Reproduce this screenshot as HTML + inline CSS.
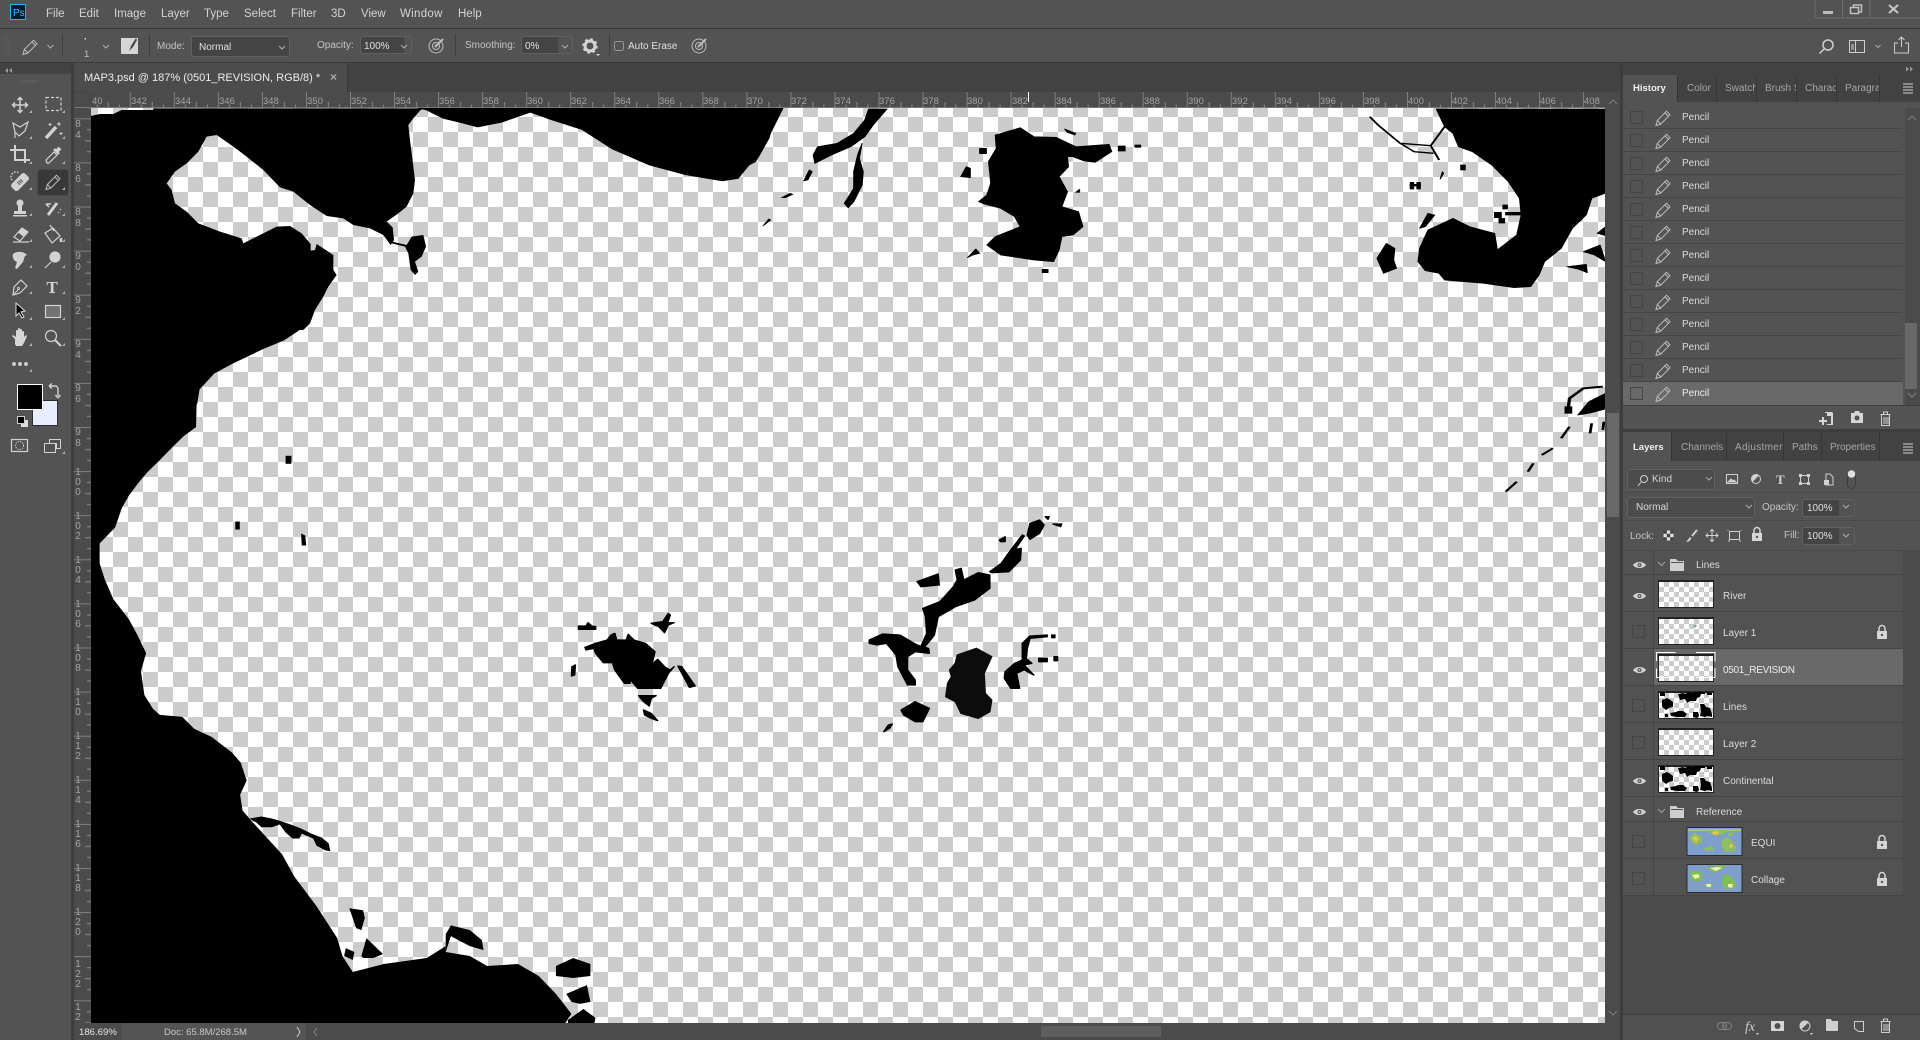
<!DOCTYPE html>
<html><head><meta charset="utf-8"><title>MAP3.psd</title>
<style>
html,body{margin:0;padding:0;background:#535353}
#r{position:relative;width:1920px;height:1040px;overflow:hidden;background:#535353;font:10px "Liberation Sans",sans-serif;color:#d4d4d4}
.a{position:absolute}
.t{position:absolute;white-space:nowrap;line-height:14px;overflow:hidden}
.in{position:absolute;background:#444;border:1px solid #616161;border-radius:3px;box-sizing:border-box}
.ro{position:absolute;left:1654px;width:249px;background:#525252;border-bottom:1px solid #444;box-sizing:border-box}
.th{position:absolute;left:1658px;width:56px;height:28px;box-sizing:border-box;border:1px solid #222;border-top-width:2px;background:#fff repeating-conic-gradient(#ccc 0 25%,#fff 0 50%) 0 0/10px 10px}
svg{position:absolute;left:0;top:0}
</style></head><body><div id="r">
<!-- chrome bars -->
<div class="a" style="left:0;top:28px;width:1920px;height:1px;background:#3a3a3a"></div>
<div class="a" style="left:0;top:62px;width:1920px;height:1px;background:#3a3a3a"></div>
<div class="a" style="left:0;top:63px;width:71px;height:11px;background:#424242"></div>
<div class="a" style="left:71px;top:63px;width:3px;height:977px;background:#3d3d3d"></div>
<div class="a" style="left:74px;top:63px;width:1548px;height:29px;background:#424242"></div>
<div class="a" style="left:74px;top:63px;width:274px;height:29px;background:#4c4c4c;border-right:1px solid #3a3a3a;box-sizing:border-box"></div>
<div class="a" style="left:74px;top:92px;width:1531px;height:16px;background:#4b4b4b"></div>
<div class="a" style="left:74px;top:108px;width:17px;height:915px;background:#4b4b4b"></div>
<div class="a" style="left:74px;top:107px;width:1531px;height:1px;background:#777"></div>
<div class="a" style="left:1605px;top:92px;width:15px;height:931px;background:#4b4b4b"></div>
<div class="a" style="left:1607px;top:413px;width:12px;height:104px;background:#696969"></div>
<div class="a" style="left:1620px;top:63px;width:3px;height:977px;background:#3d3d3d"></div>
<!-- canvas -->
<div class="a" style="left:91px;top:108px;width:1514px;height:915px;background:#fff repeating-conic-gradient(#ccc 0 25%,#fff 0 50%) -68px -81px/30px 30px"></div>
<!-- status -->
<div class="a" style="left:74px;top:1023px;width:1546px;height:17px;background:#4b4b4b"></div>
<div class="a" style="left:122px;top:1023px;width:184px;height:17px;background:#545454"></div>
<div class="a" style="left:1041px;top:1026px;width:120px;height:11px;background:#5e5e5e"></div>
<div class="t" style="left:79px;top:1026px;font-size:9.6px;color:#e4e4e4">186.69%</div>
<div class="t" style="left:164px;top:1026px;font-size:9.5px;color:#c8c8c8">Doc: 65.8M/268.5M</div>
<!-- right panel -->
<div class="a" style="left:1623px;top:63px;width:297px;height:12px;background:#424242"></div>
<div class="a" style="left:1623px;top:75px;width:297px;height:27px;background:#424242"></div>
<div class="a" style="left:1623px;top:75px;width:55px;height:28px;background:#535353;border-right:1px solid #333;box-sizing:border-box"></div>
<div class="a" style="left:1623px;top:102px;width:297px;height:303px;background:#535353"></div>
<div class="a" style="left:1905px;top:108px;width:15px;height:297px;background:#4b4b4b"></div>
<div class="a" style="left:1905px;top:323px;width:12px;height:66px;background:#696969"></div>
<div class="a" style="left:1623px;top:382px;width:280px;height:23px;background:#696969"></div>
<div class="a" style="left:1623px;top:405px;width:297px;height:1px;background:#3d3d3d"></div>
<div class="a" style="left:1623px;top:429px;width:297px;height:3px;background:#3d3d3d"></div>
<div class="a" style="left:1623px;top:432px;width:297px;height:29px;background:#424242"></div>
<div class="a" style="left:1623px;top:432px;width:49px;height:30px;background:#535353;border-right:1px solid #333;box-sizing:border-box"></div>
<div class="a" style="left:1623px;top:461px;width:297px;height:90px;background:#535353"></div>
<div class="a" style="left:1623px;top:551px;width:297px;height:463px;background:#4b4b4b"></div>
<div class="a" style="left:1623px;top:492px;width:297px;height:1px;background:#4a4a4a"></div>
<div class="a" style="left:1623px;top:520px;width:297px;height:1px;background:#4a4a4a"></div>
<div class="a" style="left:1623px;top:550px;width:297px;height:1px;background:#4a4a4a"></div>
<div class="a" style="left:1623px;top:551px;width:280px;height:345px;background:#444"></div>
<div class="a" style="left:1623px;top:1014px;width:297px;height:1px;background:#3d3d3d"></div>
<div class="a" style="left:1623px;top:1015px;width:297px;height:25px;background:#505050"></div>
<!-- eye column -->
<div class="a" style="left:1623px;top:551px;width:30px;height:344px;background:#525252"></div>
<div class="a" style="left:1623px;top:574px;width:30px;height:1px;background:#444"></div>
<div class="a" style="left:1623px;top:611px;width:30px;height:1px;background:#444"></div>
<div class="a" style="left:1623px;top:648px;width:30px;height:1px;background:#444"></div>
<div class="a" style="left:1623px;top:685px;width:30px;height:1px;background:#444"></div>
<div class="a" style="left:1623px;top:722px;width:30px;height:1px;background:#444"></div>
<div class="a" style="left:1623px;top:759px;width:30px;height:1px;background:#444"></div>
<div class="a" style="left:1623px;top:796px;width:30px;height:1px;background:#444"></div>
<div class="a" style="left:1623px;top:821px;width:30px;height:1px;background:#444"></div>
<div class="a" style="left:1623px;top:858px;width:30px;height:1px;background:#444"></div>
<div class="a" style="left:1623px;top:895px;width:30px;height:1px;background:#444"></div>
<!-- layer rows -->
<div class="ro" style="top:551px;height:24px"></div>
<div class="ro" style="top:575px;height:37px"></div>
<div class="ro" style="top:612px;height:37px"></div>
<div class="ro" style="top:649px;height:37px;background:#696969"></div>
<div class="ro" style="top:686px;height:37px"></div>
<div class="ro" style="top:723px;height:37px"></div>
<div class="ro" style="top:760px;height:37px"></div>
<div class="ro" style="top:797px;height:25px"></div>
<div class="ro" style="top:822px;height:37px"></div>
<div class="ro" style="top:859px;height:37px"></div>
<div class="th" style="top:580px"></div>
<div class="th" style="top:617px"></div>
<div class="th" style="top:654px"></div>
<div class="th" style="top:691px"></div>
<div class="th" style="top:728px"></div>
<div class="th" style="top:765px"></div>
<!-- inputs -->
<div class="in" style="left:191px;top:36px;width:99px;height:21px"></div>
<div class="in" style="left:360px;top:36px;width:52px;height:18px;background:linear-gradient(90deg,#444 43px,#535353 43px)"></div>
<div class="in" style="left:521px;top:36px;width:52px;height:18px;background:linear-gradient(90deg,#444 36px,#535353 36px)"></div>
<div class="in" style="left:1627px;top:469px;width:88px;height:21px;background:#4c4c4c"></div>
<div class="in" style="left:1627px;top:497px;width:128px;height:21px;background:#4c4c4c"></div>
<div class="in" style="left:1802px;top:499px;width:53px;height:18px;background:linear-gradient(90deg,#444 36px,#535353 36px)"></div>
<div class="in" style="left:1802px;top:527px;width:53px;height:18px;background:linear-gradient(90deg,#444 36px,#535353 36px)"></div>
<!-- text: menu -->
<div class="t" style="left:46px;top:7px;font-size:11.5px">File</div>
<div class="t" style="left:79px;top:7px;font-size:11.5px">Edit</div>
<div class="t" style="left:114px;top:7px;font-size:11.5px">Image</div>
<div class="t" style="left:161px;top:7px;font-size:11.5px">Layer</div>
<div class="t" style="left:204px;top:7px;font-size:11.5px">Type</div>
<div class="t" style="left:244px;top:7px;font-size:11.5px">Select</div>
<div class="t" style="left:291px;top:7px;font-size:11.5px">Filter</div>
<div class="t" style="left:331px;top:7px;font-size:11.5px">3D</div>
<div class="t" style="left:361px;top:7px;font-size:11.5px">View</div>
<div class="t" style="left:400px;top:7px;font-size:11.5px;letter-spacing:.3px">Window</div>
<div class="t" style="left:458px;top:7px;font-size:11.5px">Help</div>
<!-- options -->
<div class="t" style="left:157px;top:40px;color:#c4c4c4">Mode:</div>
<div class="t" style="left:199px;top:41px;color:#e0e0e0">Normal</div>
<div class="t" style="left:317px;top:39px;color:#c4c4c4">Opacity:</div>
<div class="t" style="left:364px;top:40px;color:#e0e0e0">100%</div>
<div class="t" style="left:465px;top:39px;color:#c4c4c4">Smoothing:</div>
<div class="t" style="left:525px;top:40px;color:#e0e0e0">0%</div>
<div class="t" style="left:628px;top:40px;color:#e0e0e0">Auto Erase</div>
<div class="t" style="left:84px;top:48px;color:#c4c4c4;font-size:9.5px">1</div>
<!-- doc tab -->
<div class="t" style="left:84px;top:71px;font-size:11px;color:#ececec">MAP3.psd @ 187% (0501_REVISION, RGB/8) *</div>
<div class="t" style="left:330px;top:70px;font-size:12px;color:#a8a8a8;font-weight:bold">×</div>
<!-- history tabs -->
<div class="t" style="left:1633px;top:82px;color:#f0f0f0;font-weight:bold;font-size:9.5px">History</div>
<div class="t" style="left:1687px;top:82px;color:#a6a6a6">Color</div>
<div class="t" style="left:1725px;top:82px;color:#a6a6a6;width:31px">Swatches</div>
<div class="t" style="left:1765px;top:82px;color:#a6a6a6;width:31px">Brush Settings</div>
<div class="t" style="left:1805px;top:82px;color:#a6a6a6;width:31px">Character</div>
<div class="t" style="left:1845px;top:82px;color:#a6a6a6;width:34px">Paragraph</div>
<!-- layers tabs -->
<div class="t" style="left:1633px;top:441px;color:#f0f0f0;font-weight:bold;font-size:9.5px">Layers</div>
<div class="t" style="left:1681px;top:441px;color:#a6a6a6">Channels</div>
<div class="t" style="left:1735px;top:441px;color:#a6a6a6;width:48px;letter-spacing:.3px">Adjustments</div>
<div class="t" style="left:1792px;top:441px;color:#a6a6a6">Paths</div>
<div class="t" style="left:1830px;top:441px;color:#a6a6a6">Properties</div>
<div class="t" style="left:1652px;top:473px;color:#d8d8d8">Kind</div>
<div class="t" style="left:1636px;top:501px;color:#d8d8d8">Normal</div>
<div class="t" style="left:1762px;top:501px;color:#c4c4c4">Opacity:</div>
<div class="t" style="left:1807px;top:502px;color:#e0e0e0">100%</div>
<div class="t" style="left:1630px;top:530px;color:#c4c4c4">Lock:</div>
<div class="t" style="left:1784px;top:529px;color:#c4c4c4">Fill:</div>
<div class="t" style="left:1807px;top:530px;color:#e0e0e0">100%</div>
<!-- layers names -->
<div class="t" style="left:1696px;top:559px;color:#dcdcdc">Lines</div>
<div class="t" style="left:1723px;top:590px;color:#dcdcdc">River</div>
<div class="t" style="left:1723px;top:627px;color:#dcdcdc">Layer 1</div>
<div class="t" style="left:1723px;top:664px;color:#ececec;letter-spacing:-.3px">0501_REVISION</div>
<div class="t" style="left:1723px;top:701px;color:#dcdcdc">Lines</div>
<div class="t" style="left:1723px;top:738px;color:#dcdcdc">Layer 2</div>
<div class="t" style="left:1723px;top:775px;color:#dcdcdc">Continental</div>
<div class="t" style="left:1696px;top:806px;color:#dcdcdc">Reference</div>
<div class="t" style="left:1751px;top:837px;color:#dcdcdc">EQUI</div>
<div class="t" style="left:1751px;top:874px;color:#dcdcdc">Collage</div>
<!-- history names -->
<div class="t" style="left:1682px;top:111px;color:#dcdcdc">Pencil</div>
<div class="t" style="left:1682px;top:134px;color:#dcdcdc">Pencil</div>
<div class="t" style="left:1682px;top:157px;color:#dcdcdc">Pencil</div>
<div class="t" style="left:1682px;top:180px;color:#dcdcdc">Pencil</div>
<div class="t" style="left:1682px;top:203px;color:#dcdcdc">Pencil</div>
<div class="t" style="left:1682px;top:226px;color:#dcdcdc">Pencil</div>
<div class="t" style="left:1682px;top:249px;color:#dcdcdc">Pencil</div>
<div class="t" style="left:1682px;top:272px;color:#dcdcdc">Pencil</div>
<div class="t" style="left:1682px;top:295px;color:#dcdcdc">Pencil</div>
<div class="t" style="left:1682px;top:318px;color:#dcdcdc">Pencil</div>
<div class="t" style="left:1682px;top:341px;color:#dcdcdc">Pencil</div>
<div class="t" style="left:1682px;top:364px;color:#dcdcdc">Pencil</div>
<div class="t" style="left:1682px;top:387px;color:#eee">Pencil</div>

<svg width="1920" height="1040" viewBox="0 0 1920 1040" font-family="Liberation Sans, sans-serif">
<defs>
<symbol id="pn" overflow="visible"><path d="M1 15.500l1.300-5L11.500 1.200 15 4.800 5.800 14zM2.300 10.500l3.500 3.500M10 3l3.400 3.400" fill="none" stroke="#bdbdbd"/></symbol>
<symbol id="eye" overflow="visible"><path d="M-6.500 0C-4 -4 4 -4 6.500 0C4 4 -4 4 -6.500 0z" fill="#d0d0d0"/><circle r="2" fill="#535353"/><circle r=".9" fill="#d0d0d0"/></symbol>
<symbol id="lk" overflow="visible"><path d="M-3 -2v-2.500a3 3 0 0 1 6 0V-2" fill="none" stroke="#d6d6d6" stroke-width="1.500"/><path d="M-5 -2h10v8h-10z" fill="#d6d6d6"/><circle cy="2" r="1.200" fill="#535353"/></symbol>
<symbol id="cb" overflow="visible"><rect x=".5" y=".5" width="12" height="12" fill="none" stroke="#444"/></symbol>
<symbol id="folder" overflow="visible"><path d="M0 0h6l2 2h6v10H0z" fill="#cfcfcf"/><path d="M1 3.500h12" stroke="#535353"/></symbol>
<clipPath id="cv"><rect x="91" y="108" width="1514" height="915"/></clipPath>
<pattern id="hrb" x="129.8" y="92" width="44.04" height="16" patternUnits="userSpaceOnUse"><path d="M.5 0v16" stroke="#808080"/><path d="M11.500 12.500v3.500M33.500 12.500v3.500" stroke="#8a8a8a"/><path d="M22.500 10v6" stroke="#8a8a8a"/></pattern>
<pattern id="vrb" x="74" y="118.300" width="17" height="44.100" patternUnits="userSpaceOnUse"><path d="M0 .5h17" stroke="#808080"/><path d="M13 11.500h4M13 33.500h4M11 22.500h6" stroke="#8a8a8a"/></pattern>
</defs>

<!-- MAP -->
<g clip-path="url(#cv)" fill="#000">
<g transform="translate(70 90) scale(.33333)">
<polygon points="50,78 62,78 90,72 130,72 155,60 185,60 250,60 250,55 1060,55 1050,62 1030,85 1015,105 1020,150 1030,230 1035,270 1030,310 1010,350 985,370 950,395 968,412 972,450 962,465 940,435 900,415 850,405 820,385 770,378 720,345 670,305 630,292 580,240 530,200 490,170 440,135 410,140 385,185 350,220 315,245 290,280 305,300 315,340 350,365 385,400 450,425 515,445 520,460 570,435 620,410 660,408 695,430 722,462 722,482 735,480 740,462 790,495 790,540 800,555 775,590 760,620 735,660 720,700 700,720 50,720"/>
<polygon points="965,455 1010,465 1025,440 1060,435 1068,470 1055,500 1035,515 1045,545 1035,555 1022,540 1015,490 1005,470 965,460"/>
</g>
<g transform="scale(1.2245)">
<polygon points="250,262 244,270 232,278 215,285 190,297 175,305 163,318 161,330 74,330 74,262"/>
<polygon points="340,88 348,90 362,97 375,100 390,104 410,100 433,92 450,98 475,106 500,122 530,135 560,143 590,148 603,146 612,135 625,118 640,88"/>
</g>
<g transform="translate(91 400) scale(.34439 .3986)">
<polygon points="307,0 305,68 270,90 240,115 195,155 165,180 140,205 110,240 90,270 70,320 25,360 25,410 40,450 65,500 110,550 135,590 160,635 145,680 155,740 180,775 200,790 265,795 300,825 350,845 410,885 435,910 452,955 433,990 440,1030 465,1055 555,1140 590,1195 655,1270 715,1350 730,1395 760,1435 850,1415 975,1400 1030,1370 1030,1385 1100,1395 1150,1420 1240,1415 1300,1445 1350,1490 1395,1540 1372,1570 0,1570 0,0"/>
<polygon points="460,1050 495,1045 525,1050 545,1055 580,1065 610,1075 640,1088 670,1098 690,1112 695,1132 680,1130 655,1118 645,1100 612,1088 605,1100 585,1100 565,1085 548,1065 525,1072 495,1072 480,1060"/>
<polygon points="750,1275 790,1280 795,1300 785,1330 770,1325 760,1300"/>
<polygon points="740,1375 765,1385 760,1405 735,1395"/>
<polygon points="785,1395 800,1350 830,1375 848,1390 820,1400 790,1400"/>
<polygon points="1030,1340 1045,1318 1100,1330 1135,1355 1140,1380 1100,1370 1045,1345 1030,1385"/>
<polygon points="1350,1420 1400,1400 1450,1415 1450,1445 1400,1450 1350,1445"/>
<polygon points="1380,1490 1440,1468 1450,1510 1420,1515 1395,1510"/>
<polygon points="1385,1555 1430,1528 1465,1550 1460,1570 1385,1570"/>
<rect x="565" y="140" width="17" height="20"/><rect x="419" y="305" width="13" height="20"/>
<polygon points="610,335 622,340 625,365 612,365"/>
</g>
<g transform="translate(740 105) scale(.55485 .33333)" stroke="#000" stroke-width="2" stroke-linejoin="round">
<polygon points="0,12 75,12 60,55 52,100 35,150 28,170 5,190 0,205"/>
<polygon points="232,12 265,12 240,60 225,95 200,125 165,150 135,175 132,150 140,125 175,115 205,85 225,45"/>
<polygon points="220,115 215,160 222,200 220,240 205,290 195,308 188,295 205,250 205,200 212,150"/>
<polygon points="115,228 125,195 130,200 122,225"/>
<polygon points="75,278 90,265 95,268 82,278"/><polygon points="42,362 52,342 55,345"/>
<polygon points="460,90 505,68 530,95 570,97 605,125 665,118 670,140 640,172 620,168 600,155 590,155 592,185 575,215 590,260 580,305 610,320 618,365 600,390 580,395 575,435 565,470 530,465 470,450 445,420 460,395 505,365 495,335 470,310 440,297 430,290 445,270 452,235 448,170 462,130"/>
<rect x="432" y="130" width="12" height="16"/><polygon points="398,215 408,185 415,190 415,218"/>
<polygon points="585,72 605,85 603,90 590,82"/><rect x="682" y="123" width="12" height="15"/><rect x="712" y="120" width="10" height="7"/>
<polygon points="410,458 425,432 432,445 420,450"/><rect x="545" y="493" width="10" height="10"/><polygon points="605,262 612,253 612,262"/>
<polygon points="1255,12 1570,12 1570,258 1535,280 1525,330 1500,370 1480,430 1450,470 1440,510 1425,545 1395,548 1340,535 1270,525 1260,505 1235,497 1222,470 1225,430 1240,375 1285,340 1315,365 1360,385 1365,435 1400,390 1408,330 1405,280 1385,230 1355,180 1320,140 1295,125 1285,85 1270,65"/>
<path d="M1135,35L1150,60L1190,115L1245,122L1270,65M1190,115L1215,140L1250,145M1245,122L1260,165" fill="none" stroke="#000" stroke-width="4"/>
<polygon points="1165,415 1180,430 1178,465 1183,490 1160,505 1148,460"/>
<polygon points="1240,325 1252,330 1235,365 1225,370"/>
<rect x="1360" y="322" width="12" height="16"/><rect x="1375" y="300" width="8" height="12"/><rect x="1380" y="322" width="30" height="8"/><rect x="1368" y="340" width="10" height="14"/>
<rect x="1208" y="232" width="6" height="20"/><rect x="1220" y="232" width="6" height="20"/><rect x="1208" y="238" width="18" height="5"/>
<rect x="1299" y="180" width="8" height="15"/><polygon points="1262,222 1266,200 1268,205"/>
<polygon points="1490,485 1525,478 1527,503 1510,492"/><polygon points="1520,440 1550,420 1560,470 1540,450"/><polygon points="1545,385 1560,365 1560,392"/>
<path d="M1492,920L1495,880L1520,850L1555,845" fill="none" stroke="#000" stroke-width="6"/>
<polygon points="1510,930 1530,890 1560,865 1560,912 1530,925"/>
<rect x="1487" y="905" width="12" height="20"/>
<path d="M1480,1000L1495,965M1445,1050L1465,1030M1420,1100L1430,1075M1380,1160L1400,1130M1532,985L1535,955M1555,975L1557,950" stroke="#000" stroke-width="5" fill="none"/>
</g>
<g transform="translate(500 500) scale(.38265 .33333)" stroke="#000" stroke-width="4" stroke-linejoin="round">
<polygon points="222,442 250,430 280,420 290,405 300,400 305,420 330,420 335,403 350,420 380,430 405,455 400,480 395,495 412,478 430,500 445,510 455,500 440,520 420,565 360,565 345,545 340,525 340,550 325,550 300,510 295,492 315,488 270,488 250,460 245,445 225,450"/>
<polygon points="205,378 225,378 230,368 240,378 250,380 250,388 205,388"/>
<polygon points="395,370 425,365 440,340 445,345 438,368 455,368 440,375 430,398 415,380"/>
<polygon points="188,500 197,495 195,525 187,528"/>
<polygon points="465,498 475,500 510,558 495,562"/>
<polygon points="362,587 408,587 395,595 390,618 375,605"/>
<polygon points="375,630 395,640 412,662 395,655 378,645"/>
<polygon points="1100,440 1115,400 1112,350 1105,325 1150,305 1185,260 1195,240 1190,210 1205,205 1212,240 1250,218 1280,225 1280,265 1240,300 1190,320 1145,350 1135,405 1125,420 1110,440"/>
<polygon points="1280,215 1310,190 1335,150 1362,145 1360,180 1330,215 1285,218"/>
<polygon points="1335,150 1365,105 1370,108 1345,150"/>
<polygon points="1378,105 1385,70 1410,60 1422,75 1410,100 1385,118"/>
<polygon points="1425,50 1435,50 1432,58"/><polygon points="1445,72 1468,72 1465,80"/>
<polygon points="1305,120 1320,110 1320,125 1308,125"/>
<polygon points="1090,245 1145,222 1148,255 1100,260"/>
<polygon points="965,420 1000,402 1045,405 1090,435 1120,445 1122,460 1085,455 1065,470 1065,510 1085,540 1085,555 1065,555 1040,500 1035,465 1010,430 985,435 965,430"/>
<polygon points="1195,465 1245,445 1285,470 1265,520 1268,580 1285,600 1280,635 1250,655 1205,640 1190,605 1165,590 1170,550 1180,530 1175,510 1190,490" fill="#0c0c0c" stroke="#0c0c0c"/>
<polygon points="1320,515 1345,490 1365,480 1365,430 1385,408 1430,405 1430,410 1385,415 1378,445 1375,475 1390,490 1370,495 1395,525 1370,510 1350,520 1358,565 1335,565 1318,535"/>
<rect x="1442" y="405" width="8" height="8"/><rect x="1408" y="475" width="22" height="10"/><rect x="1448" y="470" width="9" height="12"/>
<polygon points="1048,630 1085,605 1122,625 1105,665 1085,665 1055,645"/>
<polygon points="1003,695 1015,675 1025,672 1018,685"/>
</g>
</g>

<!-- rulers -->
<rect x="91" y="92" width="1514" height="16" fill="url(#hrb)"/>
<rect x="74" y="108" width="17" height="915" fill="url(#vrb)"/>
<path d="M74 92h17v15M74 92" fill="none" stroke="#444"/>
<path d="M1028.500 92v10" stroke="#fff"/>
<g font-size="9.500" fill="#a4a4a4">
<text x="92" y="104">40</text><text x="131" y="104">342</text><text x="175" y="104">344</text><text x="219" y="104">346</text><text x="263" y="104">348</text><text x="307" y="104">350</text><text x="351" y="104">352</text><text x="395" y="104">354</text><text x="439" y="104">356</text><text x="483" y="104">358</text><text x="527" y="104">360</text><text x="571" y="104">362</text><text x="615" y="104">364</text><text x="659" y="104">366</text><text x="703" y="104">368</text><text x="747" y="104">370</text><text x="791" y="104">372</text><text x="835" y="104">374</text><text x="879" y="104">376</text><text x="923" y="104">378</text><text x="967" y="104">380</text><text x="1012" y="104">382</text><text x="1056" y="104">384</text><text x="1100" y="104">386</text><text x="1144" y="104">388</text><text x="1188" y="104">390</text><text x="1232" y="104">392</text><text x="1276" y="104">394</text><text x="1320" y="104">396</text><text x="1364" y="104">398</text><text x="1408" y="104">400</text><text x="1452" y="104">402</text><text x="1496" y="104">404</text><text x="1540" y="104">406</text><text x="1584" y="104">408</text>
</g>
<g font-size="10" fill="#a4a4a4" text-anchor="middle">
<text x="78" y="127">8</text><text x="78" y="138">4</text>
<text x="78" y="171">8</text><text x="78" y="182">6</text>
<text x="78" y="215">8</text><text x="78" y="226">8</text>
<text x="78" y="259">9</text><text x="78" y="270">0</text>
<text x="78" y="303">9</text><text x="78" y="314">2</text>
<text x="78" y="347">9</text><text x="78" y="358">4</text>
<text x="78" y="391">9</text><text x="78" y="402">6</text>
<text x="78" y="435">9</text><text x="78" y="446">8</text>
<text x="78" y="475">1</text><text x="78" y="485">0</text><text x="78" y="495">0</text>
<text x="78" y="519">1</text><text x="78" y="529">0</text><text x="78" y="539">2</text>
<text x="78" y="563">1</text><text x="78" y="573">0</text><text x="78" y="583">4</text>
<text x="78" y="607">1</text><text x="78" y="617">0</text><text x="78" y="627">6</text>
<text x="78" y="651">1</text><text x="78" y="661">0</text><text x="78" y="671">8</text>
<text x="78" y="695">1</text><text x="78" y="705">1</text><text x="78" y="715">0</text>
<text x="78" y="739">1</text><text x="78" y="749">1</text><text x="78" y="759">2</text>
<text x="78" y="783">1</text><text x="78" y="793">1</text><text x="78" y="803">4</text>
<text x="78" y="827">1</text><text x="78" y="837">1</text><text x="78" y="847">6</text>
<text x="78" y="871">1</text><text x="78" y="881">1</text><text x="78" y="891">8</text>
<text x="78" y="915">1</text><text x="78" y="925">2</text><text x="78" y="935">0</text>
<text x="78" y="967">1</text><text x="78" y="977">2</text><text x="78" y="987">2</text>
<text x="78" y="1010">1</text><text x="78" y="1020">2</text>
</g>

<!-- Ps logo -->
<rect x="10.500" y="4.500" width="15" height="15" fill="#001b2e" stroke="#1fb5e8"/>
<text x="13" y="16" font-size="10" fill="#2fc4f2">Ps</text>

<!-- window controls -->
<path d="M1815 0v15a3 3 0 0 0 3 3H1920M1842.500 0v18M1870 0v18" fill="none" stroke="#6e6e6e"/>
<rect x="1823" y="11" width="10" height="3" fill="#bcbcbc"/>
<path d="M1851.500 5.500h8v6h-8zM1854.500 5.500v-2.500h8v7h-3" fill="none" stroke="#c0c0c0" stroke-width="1.500" transform="translate(-1 2)"/>
<path d="M1889 5l9 8M1898 5l-9 8" stroke="#c8c8c8" stroke-width="2"/>
<!-- options bar icons -->
<path d="M5 36v19M8 36v19" stroke="#6a6a6a" stroke-dasharray="1 1" stroke-width="1"/>
<use href="#pn" x="22" y="39"/>
<path d="M47.500 45l3 3 3-3M103 45l3 3 3-3M279 46l3 3 3-3M401 45l3 3 3-3M562 45l3 3 3-3" fill="none" stroke="#b0b0b0"/>
<path d="M62.500 34v22M149.500 34v22M455.500 34v22M609.500 34v22" stroke="#3e3e3e"/>
<rect x="84.500" y="38" width="1.500" height="1.500" fill="#ddd"/>
<rect x="121" y="38" width="17" height="16" fill="#d6d6d6"/>
<path d="M136 38l-5 8-2 5 4-4 4-7z" fill="#444"/>
<g transform="translate(436 46)" fill="none" stroke="#bdbdbd"><circle r="7"/><circle r="3.500"/><path d="M-1 1L7 -7" stroke-width="2"/></g>
<g transform="translate(590 46)"><circle r="5" fill="none" stroke="#d4d4d4" stroke-width="3"/><circle r="6.500" fill="none" stroke="#d4d4d4" stroke-width="2.500" stroke-dasharray="2.500 2.600"/><path d="M6 8h4l-2 2z" fill="#ddd"/></g>
<rect x="614.500" y="41.500" width="9" height="9" rx="2" fill="none" stroke="#999"/>
<g transform="translate(699 46)" fill="none" stroke="#bdbdbd"><circle r="7"/><circle r="3.500"/><path d="M-1 1L7 -7" stroke-width="2"/></g>
<g fill="none" stroke="#cfcfcf" stroke-width="1.500"><circle cx="1828" cy="45" r="5"/><path d="M1824 49l-4.500 4.500"/></g>
<g fill="none" stroke="#cfcfcf"><rect x="1849.500" y="40.500" width="15" height="12"/><path d="M1855.500 41v11"/><path d="M1851 45h3M1851 47h3M1851 49h3"/><path d="M1875.500 45l2.500 2.500 2.500-2.500" stroke="#aaa"/><path d="M1898 43h-3.500v10h14v-10h-3.500M1901.500 47v-10M1898.500 40l3-3 3 3"/></g>

<!-- collapse arrows -->
<path d="M8 68l-3 2.500 3 2.500zM12 68l-3 2.500 3 2.500z" fill="#999"/>
<path d="M1906 66.500l3 2.500-3 2.500zM1910 66.500l3 2.500-3 2.500z" fill="#999"/>
<path d="M21 80v3M24 80v3M27 80v3M30 80v3M33 80v3M36 80v3" stroke="#6a6a6a"/>
<!-- toolbar -->
<rect x="37.500" y="169.500" width="31" height="26" rx="3" fill="#383838" stroke="#4a4a4a"/>
<g fill="none" stroke="#d2d2d2" stroke-width="1.200">
 <g transform="translate(20 105)" stroke-width="1.500"><path d="M-7 0H7M0 -7V7M-2.500 -5L0 -7.500 2.500 -5M-2.500 5L0 7.500 2.500 5M-5 -2.500L-7.500 0 -5 2.500M5 -2.500L7.500 0 5 2.500"/></g>
 <rect x="46" y="97.500" width="15" height="13" stroke-dasharray="3 2"/>
 <g transform="translate(20 130)"><path d="M-7 -7L0 -3 8 -8 5 1 -1 6 -5 2z"/><path d="M-5 2l0 6"/></g>
 <g transform="translate(53 130)"><path d="M-7 8L3 -3" stroke-width="3.500"/><path d="M-3 -7v3M-4.500 -5.500h3M6 -8v4M4 -6h4M8 2v3M6.500 3.500h3" stroke-width="1"/></g>
 <g transform="translate(20 155)" stroke-width="2"><path d="M-5 -10V5H10"/><path d="M-10 -5H5V8"/></g>
 <g transform="translate(53 155)"><path d="M-6 8L-7 5 1 -3 4 0 -4 8z"/><path d="M1 -6L6 -1" stroke-width="2.500"/><path d="M3 -3l4-4" stroke-width="4"/></g>
 <g transform="translate(20 182) rotate(-45)"><rect x="-9" y="-4" width="18" height="8" rx="2" fill="#d2d2d2"/><path d="M-2 -2v4M0 -2v4M2 -2v4" stroke="#555" stroke-width="1"/></g>
 <path d="M12 180a5 5 0 0 1 7 -7" stroke-dasharray="1.500 1.500" stroke-width="1.500"/>
 <g transform="translate(20 208)" fill="#d2d2d2" stroke="none"><circle cy="-5" r="3.500"/><rect x="-2" y="-3" width="4" height="6"/><rect x="-6" y="3" width="12" height="3"/><rect x="-7" y="7" width="14" height="1.500"/></g>
 <g transform="translate(53 208)"><path d="M-5 7L4 -5" stroke-width="3"/><path d="M-7 -4l5 0M-7 -4l3 3" stroke-width="1.500"/><path d="M5 4l1 1M7 1l1 1" stroke-width="1"/></g>
 <g transform="translate(20 234)"><path d="M-6 3L2 -6 8 -2 0 7z"/><path d="M-7 8H9"/><path d="M2 -6l6 4-4 5-6-4.500z" fill="#d2d2d2" stroke="none"/></g>
 <g transform="translate(53 234)"><path d="M-8 -1L0 -6 7 2 -1 9z"/><path d="M-3 -9L1 -3"/><path d="M8 4v4" stroke-width="2.500"/></g>
 <g transform="translate(20 260)" fill="#d2d2d2" stroke="none"><path d="M-7 -6C-4 -9 4 -9 7 -5C3 -4 5 0 2 3L-3 9-5 8-3 2C-6 1-8 -2-7 -6z"/></g>
 <g transform="translate(53 260)"><circle cx="2" cy="-3" r="5" fill="#d2d2d2"/><path d="M-2 2L-8 8"/></g>
 <g transform="translate(20 287)"><path d="M-7 8L-6 0 1 -7 7 -1 0 6z"/><path d="M-6 7L-2 3" stroke-width="1"/><circle cx="-1.500" cy="1.500" r="1" stroke-width="1"/></g>
 <rect x="45.500" y="305.500" width="15" height="12" fill="#727272"/>
 <g transform="translate(53 338)"><circle cx="-2" cy="-2" r="5.500"/><path d="M2 2L8 8" stroke-width="2"/></g>
 <rect x="11.500" y="439.500" width="16" height="12"/><circle cx="19.500" cy="445.500" r="4" stroke-dasharray="1.200 1.200" stroke-width="1"/>
 <path d="M49.500 439.500h11v9h-4v-5h-7zM44.500 443.500h11v9h-11z" stroke-width="1"/>
</g>
<text x="46.500" y="293" font-size="17" font-weight="bold" fill="#d4d4d4" font-family="Liberation Serif, serif">T</text>
<use href="#pn" x="45" y="174"/>
<path d="M16 303l0 13 3-3 3 5 2-1-3-5 4-1z" fill="#000" stroke="#ddd"/>
<path d="M15 344v-5l-3-3 1-1 3 2v-6a1 1 0 0 1 2 0v-2a1 1 0 0 1 2 0v1a1 1 0 0 1 2 0v2a1 1 0 0 1 2 0v5l2-2 1 1-3 7-2 3h-6z" fill="#d6d6d6"/>
<circle cx="14" cy="364" r="2" fill="#ccc"/><circle cx="20" cy="364" r="2" fill="#ccc"/><circle cx="26" cy="364" r="2" fill="#ccc"/>
<g fill="#b0b0b0">
<path d="M29 113h3v-3zM62 113h3v-3zM29 139h3v-3zM62 139h3v-3zM29 164h3v-3zM62 164h3v-3zM29 190h3v-3zM62 190h3v-3zM29 216h3v-3zM62 216h3v-3zM29 242h3v-3zM62 242h3v-3zM29 268h3v-3zM62 268h3v-3zM29 294h3v-3zM62 294h3v-3zM29 320h3v-3zM62 320h3v-3zM29 346h3v-3zM62 346h3v-3zM29 372h3v-3zM62 454h3v-3z"/>
</g>
<!-- colors -->
<rect x="32.500" y="400.500" width="25" height="25" fill="#e9eeff" stroke="#2c2c2c"/>
<rect x="17.500" y="384.500" width="25" height="25" fill="#000" stroke="#fff"/>
<path d="M49 386h6a3 3 0 0 1 3 3v7M49 386l3-2.500M49 386l3 2.500M58 398l-2.500-3M58 398l2.500-3" fill="none" stroke="#d0d0d0" stroke-width="1.400"/>
<rect x="21" y="420" width="7" height="7" fill="#ddd"/><rect x="17.500" y="416.500" width="7" height="7" fill="#000" stroke="#ccc"/>
<!-- scrollbar arrows -->
<path d="M1609 104l4-4 4 4M1609 1011l4 4 4-4" fill="none" stroke="#808080"/>
<path d="M1908 120l4-4 4 4M1908 393l4 4 4-4" fill="none" stroke="#808080"/>
<path d="M297 1027l3 5-3 5" fill="none" stroke="#d0d0d0"/>
<path d="M317 1028l-3 4 3 4" fill="none" stroke="#8a8a8a"/>
<!-- tab seps -->
<path d="M1716.500 75v27M1756.500 75v27M1796.500 75v27M1836.500 75v27M1879.500 75v27M1726.500 432v29M1783.500 432v29M1821.500 432v29M1879.500 432v29" stroke="#363636"/>
<path d="M1903 84h10M1903 87h10M1903 90h10M1903 93h10M1903 444h10M1903 447h10M1903 450h10M1903 453h10" stroke="#cdcdcd"/>
<!-- history rows -->
<g stroke="#454545" fill="none"><path d="M1623 128.500H1902M1623 151.500H1902M1623 174.500H1902M1623 197.500H1902M1623 220.500H1902M1623 243.500H1902M1623 266.500H1902M1623 289.500H1902M1623 312.500H1902M1623 335.500H1902M1623 358.500H1902M1623 381.500H1902"/></g>
<g><use href="#cb" x="1630" y="111"/><use href="#cb" x="1630" y="134"/><use href="#cb" x="1630" y="157"/><use href="#cb" x="1630" y="180"/><use href="#cb" x="1630" y="203"/><use href="#cb" x="1630" y="226"/><use href="#cb" x="1630" y="249"/><use href="#cb" x="1630" y="272"/><use href="#cb" x="1630" y="295"/><use href="#cb" x="1630" y="318"/><use href="#cb" x="1630" y="341"/><use href="#cb" x="1630" y="364"/><use href="#cb" x="1630" y="387"/></g>
<g><use href="#pn" x="1655" y="110"/><use href="#pn" x="1655" y="133"/><use href="#pn" x="1655" y="156"/><use href="#pn" x="1655" y="179"/><use href="#pn" x="1655" y="202"/><use href="#pn" x="1655" y="225"/><use href="#pn" x="1655" y="248"/><use href="#pn" x="1655" y="271"/><use href="#pn" x="1655" y="294"/><use href="#pn" x="1655" y="317"/><use href="#pn" x="1655" y="340"/><use href="#pn" x="1655" y="363"/><use href="#pn" x="1655" y="386"/></g>
<!-- history footer -->
<g fill="#d6d6d6"><path d="M1819 420h3v-3h2v3h3v2h-3v3h-2v-3h-3z"/><path d="M1825 412h7l1 1v12h-7l2-1h3v-8h-4v-3h-2z"/><path d="M1851 413h3l1-2h4l1 2h3v10h-12z"/></g>
<circle cx="1857" cy="418" r="2.500" fill="#535353"/>
<g fill="none" stroke="#d0d0d0"><path d="M1880.500 414.500h10M1883.500 414v-2h4v2M1881.500 415v10.500h8V415M1884 417v7M1886 417v7M1888 417v7"/></g>
<!-- layers filter icons -->
<g fill="none" stroke="#d0d0d0">
<circle cx="1644" cy="479" r="3.500"/><path d="M1641 482l-3 4"/>
<path d="M1706 477l3 3 3-3" stroke="#aaa"/>
<path d="M1746 505l3 3 3-3M1843 505l3 3 3-3M1843 534l3 3 3-3" stroke="#aaa"/>
<rect x="1726.500" y="474.500" width="11" height="9"/>
<path d="M1728 482l3-3 2 2 1-1 2 2h-8z" fill="#d0d0d0"/>
<circle cx="1756" cy="479" r="4.500"/><path d="M1752.500 482A4.500 4.500 0 0 1 1759 475.500z" fill="#d0d0d0" stroke="none"/>
<rect x="1800.500" y="475.500" width="8" height="8"/><path d="M1799 474h3v3h-3zM1807 474h3v3h-3zM1799 482h3v3h-3zM1807 482h3v3h-3z" fill="#d0d0d0" stroke="none"/>
<path d="M1826 474h4l3 3v8h-7z"/><rect x="1824" y="480" width="5" height="5" fill="#d0d0d0" stroke="none"/>
<rect x="1847.500" y="471.500" width="8" height="17" rx="4" stroke="#3c3c3c"/>
</g>
<circle cx="1851.500" cy="474" r="3.800" fill="#e0e0e0"/>
<text x="1776" y="484" font-size="13" font-weight="bold" fill="#d0d0d0" font-family="Liberation Serif, serif">T</text>
<!-- lock icons -->
<g>
<rect x="1663.500" y="530.500" width="10" height="10" fill="#e0e0e0"/>
<path d="M1663.500 530.500h3.300v3.300h-3.300zM1670.200 530.500h3.300v3.300h-3.300zM1666.800 533.800h3.400v3.400h-3.400zM1663.500 537.200h3.300v3.300h-3.300zM1670.200 537.200h3.300v3.300h-3.300z" fill="#444"/>
<path d="M1697 530l-5 6" stroke="#d0d0d0" stroke-width="2"/><path d="M1690 537l-4 5 3-.5 2.500-3z" fill="#d0d0d0"/>
<path d="M1706 535.500h12M1712 529.500v12M1710 531.500l2-2 2 2M1710 539.500l2 2 2-2M1708 533.500l-2 2 2 2M1716 533.500l2 2-2 2" fill="none" stroke="#d0d0d0"/>
<path d="M1729.500 531.500h10v8h-10z" fill="none" stroke="#d0d0d0"/><path d="M1728 530v1M1741 530v1M1728 541h2M1739 541h2" stroke="#d0d0d0"/>
<use href="#lk" x="1757" y="535"/>
</g>
<!-- eyes etc -->
<g><use href="#eye" x="1639.500" y="565"/><use href="#eye" x="1639.500" y="596"/><use href="#eye" x="1639.500" y="670"/><use href="#eye" x="1639.500" y="781"/><use href="#eye" x="1639.500" y="812"/></g>
<g><use href="#cb" x="1632" y="625"/><use href="#cb" x="1632" y="699"/><use href="#cb" x="1632" y="736"/><use href="#cb" x="1632" y="835"/><use href="#cb" x="1632" y="872"/></g>
<path d="M1653.500 551v344" stroke="#444"/>
<g><use href="#folder" x="1670" y="559"/><use href="#folder" x="1670" y="806"/></g>
<path d="M1658 562l3.500 3.500 3.500-3.500M1658 809l3.500 3.500 3.500-3.500" fill="none" stroke="#a0a0a0"/>
<g><use href="#lk" x="1882" y="633"/><use href="#lk" x="1882" y="843"/><use href="#lk" x="1882" y="880"/></g>
<!-- selected thumb corners -->
<path d="M1656.500 661v-8.500h19M1696 652.500h19v9M1715 668v9.500h-19M1675 677.500h-18.500v-9" fill="none" stroke="#fff"/>
<!-- blob thumbs -->
<g fill="#000" id="tb1">
<path d="M1662 700l5-2 2 1 4 3 0 5-4 1-3 2-4-3zM1678 694l5-1 2 1 3-2 5 1 2-1 6 2-1 3-3 1-1 3-6 0-3 2-2-4-5 1zM1700 704l4 0 2 3 4 1 2 6 0 3-5-1-2 1-5-1 1-5zM1670 713l6-1 2-1 5 0 4 3-2 3-8 0-6-1zM1693 712l5 0 1 4-2 2-4-1zM1660 692l5 0 0 4-5 0zM1697 692l8 0 0 2-8 0zM1707 692l5 1 0 2-5 0zM1665 714l3 0 0 3-3 0z"/>
</g>
<g fill="#000">
<path d="M1662 774l5-2 2 1 4 3 0 5-4 1-3 2-4-3zM1678 768l5-1 2 1 3-2 5 1 2-1 6 2-1 3-3 1-1 3-6 0-3 2-2-4-5 1zM1700 778l4 0 2 3 4 1 2 6 0 3-5-1-2 1-5-1 1-5zM1670 787l6-1 2-1 5 0 4 3-2 3-8 0-6-1zM1693 786l5 0 1 4-2 2-4-1zM1660 766l5 0 0 4-5 0zM1697 766l8 0 0 2-8 0zM1707 766l5 1 0 2-5 0zM1665 788l3 0 0 3-3 0z"/>
</g>
<circle cx="1695" cy="626" r="1.600" fill="#7bb0a0"/>
<!-- reference thumbs -->
<rect x="1687" y="827.500" width="55" height="28" fill="#7f9ec9" stroke="#2a2a2a"/>
<path d="M1688 829h53v2h-53z" fill="#a6c46d"/>
<path d="M1690 836l5-3 3 2 3 0 1 7-6 3-5-3zM1708 832l10-2 9 0-3 4-8 2zM1722 840l5-3 4 3 5 7-1 4-10 1-3-5zM1704 848l8-2 2 4-8 1zM1728 833l5-1 0 3-4 1z" fill="#8fbf5a"/>
<path d="M1692 838l4-2 3 3-3 3zM1712 832l6-1 1 3-5 1zM1729 845l3-1 1 3-3 1z" fill="#e6c650"/>
<rect x="1687" y="864.500" width="55" height="28" fill="#7f9ec9" stroke="#2a2a2a"/>
<path d="M1690 873l5-3 6 2 1 7-6 3-5-3zM1706 868l10-2 9 0-3 4-8 2zM1722 877l5-3 4 3 5 7-1 4-10 1-3-5zM1702 885l8-2 4 2-5 2z" fill="#7fbf55"/>
<path d="M1692 875l6-1 2 3-5 2zM1710 868l8-1 4 1-6 3zM1728 884l5 0-1 4-4-1zM1706 884l5 0 0 3-4 0z" fill="#f0efb0"/>
<!-- layers footer -->
<g fill="none" stroke="#cfcfcf">
<path d="M1722 1026h4" stroke="#808080"/><rect x="1717.500" y="1022.500" width="9" height="7" rx="3.500" stroke="#808080"/><rect x="1722.500" y="1022.500" width="9" height="7" rx="3.500" stroke="#808080"/>
<rect x="1771" y="1021" width="13" height="10" fill="#d6d6d6" stroke="none"/>
<circle cx="1805" cy="1026" r="5"/><path d="M1801 1029.500a5 5 0 0 1 7.500-7z" fill="#d0d0d0" stroke="none"/>
<path d="M1854.500 1021.500h9v10h-5l-4-3z"/>
<path d="M1880.500 1021.500h10M1883.500 1021v-2h4v2M1881.500 1022v10.500h8V1022M1884 1024v7M1886 1024v7M1888 1024v7"/>
</g>
<circle cx="1777.500" cy="1026" r="3" fill="#505050"/>
<path d="M1826 1019h5l1 2h6v10h-12z" fill="#cfcfcf"/>
<text x="1745" y="1031" font-size="14" font-style="italic" fill="#cfcfcf" font-family="Liberation Serif, serif">fx</text>
<path d="M1756 1033h3l-1.500 2zM1810 1033h3l-1.500 2z" fill="#e0e0e0"/>
</svg>
</div></body></html>
